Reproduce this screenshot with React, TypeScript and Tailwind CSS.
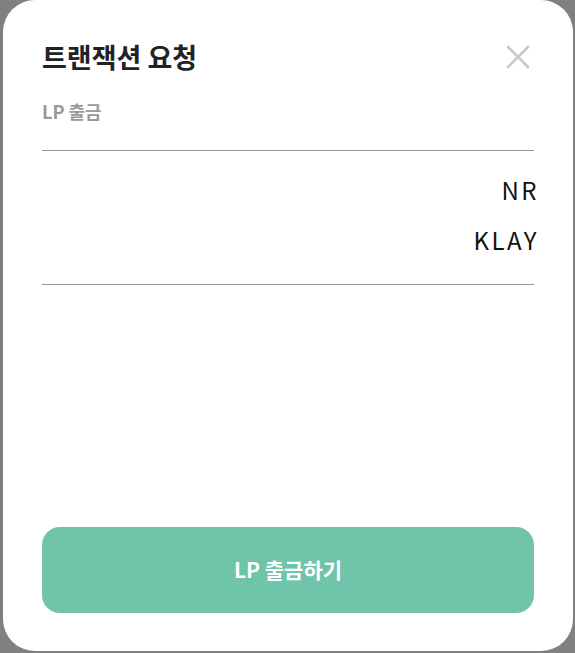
import React from 'react';

const font = { fontFamily: '"Noto Sans CJK KR", "Noto Sans", sans-serif' };

const TxRequestModal = () => {
  return (
    <div className="flex h-[653px] w-[575px] bg-[#808080]" style={font}>
      <div className="ml-[3px] flex h-[651px] w-[570px] flex-col rounded-[32px] bg-white px-[39px]">
        {/* header */}
        <div className="mt-[39px] flex items-center justify-between">
          <h2 className="text-[27px] font-bold leading-[36px] text-[#222222]">트랜잭션 요청</h2>
          <button className="mr-[1px] flex h-[30px] w-[30px] items-center justify-center">
            <svg width="24" height="24" viewBox="0 0 24 24" fill="none" stroke="#c8c8c8" strokeWidth="2.6" strokeLinecap="round">
              <path d="M2 2L22 22M22 2L2 22" />
            </svg>
          </button>
        </div>
        <p className="mt-[24px] text-[18px] font-bold leading-[25px] text-[#999999]">LP 출금</p>

        {/* token list */}
        <div className="mt-[26px] border-t border-[#999999]" />
        <div className="-mr-[5px] flex flex-col items-end pt-[23px] pb-[28px] text-[24px] tracking-[2.5px] text-[#111111]">
          <span className="leading-[32px]">NR</span>
          <span className="mt-[18px] leading-[32px]">KLAY</span>
        </div>
        <div className="border-t border-[#999999]" />

        {/* action */}
        <button className="mt-auto mb-[38px] flex h-[86px] w-full items-center justify-center rounded-[18px] bg-[#70c4aa] text-[21px] font-bold text-white">
          LP 출금하기
        </button>
      </div>
    </div>
  );
};

export default function App() {
  return <TxRequestModal />;
}
